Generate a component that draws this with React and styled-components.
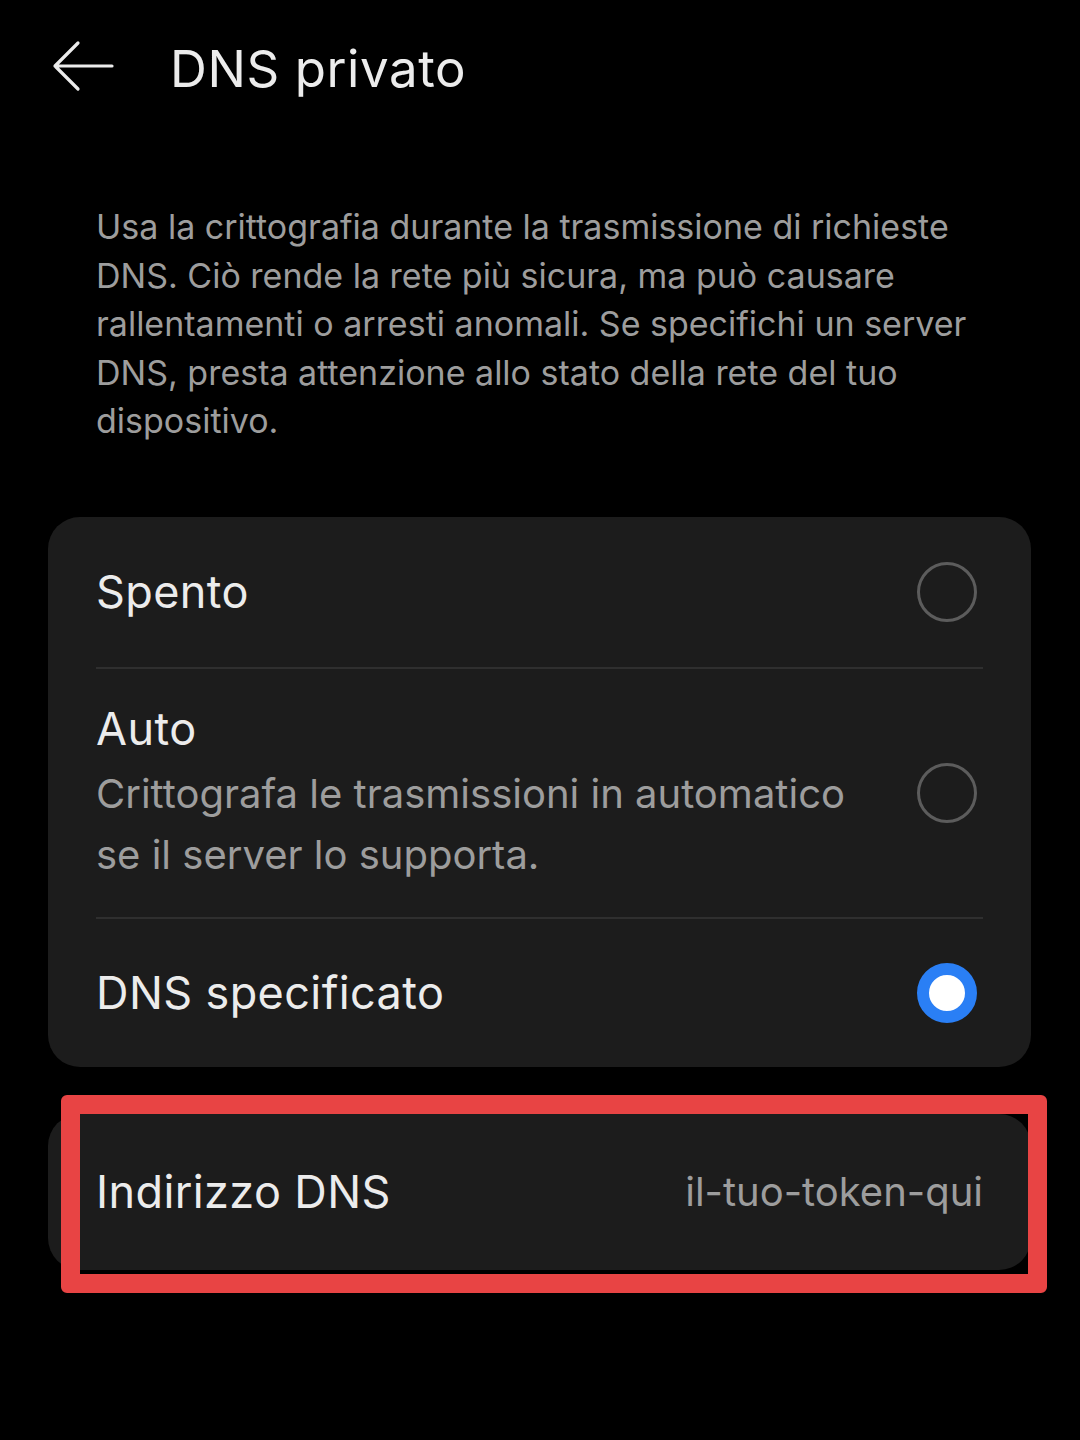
import React from "react";
import styled, { createGlobalStyle } from "styled-components";

const Global = createGlobalStyle`
  html, body {
    margin: 0;
    padding: 0;
    background: #000;
  }
  body {
    font-family: Inter, Roboto, "Noto Sans", sans-serif;
    color: #ececec;
  }
`;

const Page = styled.div`
  width: 1080px;
  height: 1440px;
  background: #000;
  overflow: hidden;
`;

const Header = styled.header`
  display: flex;
  align-items: center;
  height: 136px;
  padding-left: 52px;
  gap: 56px;
`;

const BackButton = styled.button`
  width: 62px;
  height: 62px;
  padding: 0;
  border: 0;
  background: none;
  display: flex;
  align-items: center;
  justify-content: center;
  margin-top: -4px;
`;

const Title = styled.h1`
  margin: 0;
  font-size: 51px;
  font-weight: 400;
  color: #ececec;
  letter-spacing: 0.6px;
`;

const Description = styled.p`
  margin: 67px 0 0;
  padding: 0 96px;
  font-size: 34px;
  line-height: 48.5px;
  color: #9d9d9d;
  letter-spacing: 0;
`;

const Card = styled.section`
  margin: ${(p) => p.$mt}px 49px 0 48px;
  background: #1c1c1c;
  border-radius: 32px;
  padding: 0 48px;
`;

const Row = styled.div`
  display: flex;
  align-items: center;
  min-height: ${(p) => p.$h}px;
  border-bottom: ${(p) => (p.$last ? "none" : "2px solid #2f2f2f")};
  gap: 48px;
`;

const RowText = styled.div`
  flex: 1;
  display: flex;
  flex-direction: column;
`;

const RowTitle = styled.div`
  font-size: 45px;
  line-height: 56px;
  color: #ececec;
  letter-spacing: 0.4px;
`;

const RowSub = styled.div`
  font-size: 40px;
  line-height: 61px;
  color: #9d9d9d;
  margin-top: 6px;
  letter-spacing: 0;
`;

const Radio = styled.span`
  width: 60px;
  height: 60px;
  box-sizing: border-box;
  border-radius: 50%;
  flex-shrink: 0;
  margin-right: 6px;
  border: ${(p) => (p.$on ? "12px solid #2a7ff5" : "3px solid #5c5c5c")};
  background: ${(p) => (p.$on ? "#fff" : "transparent")};
`;

const AddressWrap = styled.div`
  position: relative;
`;

const AddressRow = styled.div`
  display: flex;
  align-items: center;
  justify-content: space-between;
  height: 156px;
`;

const AddressValue = styled.span`
  font-size: 40px;
  color: #9d9d9d;
  letter-spacing: 0;
`;

const Highlight = styled.div`
  position: absolute;
  left: 61px;
  top: -19px;
  width: 948px;
  height: 160px;
  border: 19px solid #e84444;
  border-radius: 6px;
  pointer-events: none;
`;

const Arrow = () => (
  <svg width="62" height="52" viewBox="0 0 62 52" fill="none">
    <path
      d="M60 26H3M26 3L3 26L26 49"
      stroke="#ececec"
      strokeWidth="3.2"
      strokeLinecap="round"
      strokeLinejoin="round"
    />
  </svg>
);

export default function App() {
  return (
    <Page>
      <Global />
      <Header>
        <BackButton aria-label="Indietro">
          <Arrow />
        </BackButton>
        <Title>DNS privato</Title>
      </Header>

      <Description>
        Usa la crittografia durante la trasmissione di richieste DNS. Ciò rende
        la rete più sicura, ma può causare rallentamenti o arresti anomali. Se
        specifichi un server DNS, presta attenzione allo stato della rete del
        tuo dispositivo.
      </Description>

      <Card $mt={71}>
        <Row $h={150}>
          <RowText>
            <RowTitle>Spento</RowTitle>
          </RowText>
          <Radio />
        </Row>
        <Row $h={248}>
          <RowText>
            <RowTitle>Auto</RowTitle>
            <RowSub>
              Crittografa le trasmissioni in automatico se il server lo
              supporta.
            </RowSub>
          </RowText>
          <Radio />
        </Row>
        <Row $h={148} $last>
          <RowText>
            <RowTitle>DNS specificato</RowTitle>
          </RowText>
          <Radio $on />
        </Row>
      </Card>

      <AddressWrap>
        <Card $mt={47}>
          <AddressRow>
            <RowTitle>Indirizzo DNS</RowTitle>
            <AddressValue>il-tuo-token-qui</AddressValue>
          </AddressRow>
        </Card>
        <Highlight />
      </AddressWrap>
    </Page>
  );
}
